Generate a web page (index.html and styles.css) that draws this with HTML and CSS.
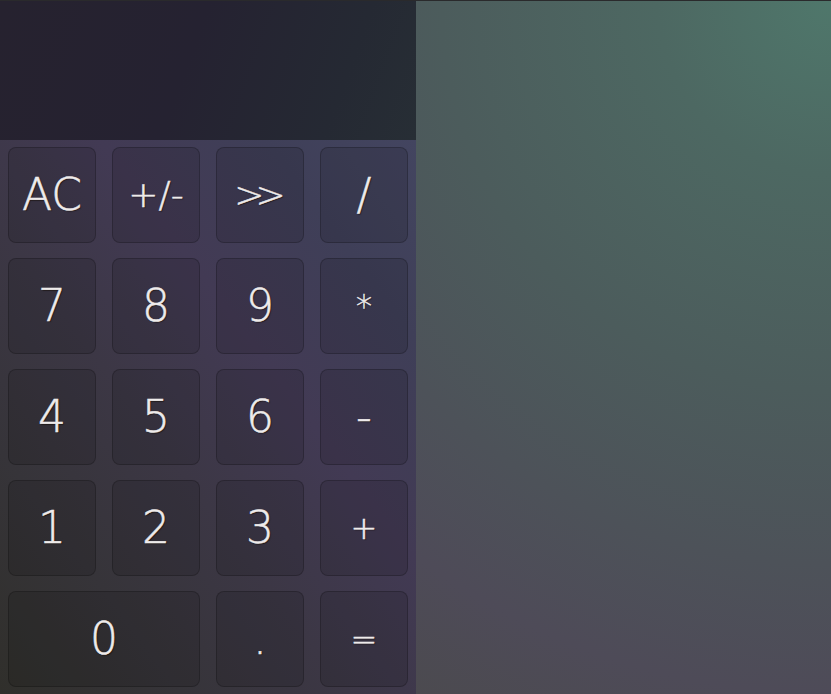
FILE: index.html
```html
<!DOCTYPE html>
<html lang="en">
<head>
<meta charset="utf-8">
<title>Calculator</title>
<link rel="stylesheet" href="styles.css">
</head>
<body>
<div class="page">
  <div class="calc">
    <div class="display"></div>
    <div class="keypad">
      <button class="key">AC</button>
      <button class="key key-mid">+/-</button>
      <button class="key key-mid key-tight">&gt;&gt;</button>
      <button class="key">/</button>
      <button class="key">7</button>
      <button class="key">8</button>
      <button class="key">9</button>
      <button class="key key-op">*</button>
      <button class="key">4</button>
      <button class="key">5</button>
      <button class="key">6</button>
      <button class="key">-</button>
      <button class="key">1</button>
      <button class="key">2</button>
      <button class="key">3</button>
      <button class="key key-op">+</button>
      <button class="key key-wide">0</button>
      <button class="key">.</button>
      <button class="key key-op">=</button>
    </div>
  </div>
</div>
</body>
</html>
```
FILE: styles.css
```css
html, body {
  margin: 0;
  padding: 0;
  height: 100%;
  overflow: hidden;
}

body {
  background: #2a2a2c;
  font-family: "DejaVu Sans", sans-serif;
}

.page {
  box-sizing: border-box;
  height: 100%;
  border-top: 1px solid #2a2a2c;
  background: radial-gradient(circle farthest-corner at 100% 0%,
    #4f776b 0%,
    #4d6862 16%,
    #4c5c5c 36%,
    #4d5259 52%,
    #4e4b58 64%,
    #4b4a4e 76%,
    #3e3c42 100%);
  display: flex;
  align-items: flex-start;
}

.calc {
  width: 416px;
  display: flex;
  flex-direction: column;
}

.display {
  height: 139px;
  background: linear-gradient(110deg, #26222f 0%, #252231 45%, #252933 80%, #272e35 100%);
}

.keypad {
  display: grid;
  grid-template-columns: repeat(4, 88px);
  grid-auto-rows: 96px;
  column-gap: 16px;
  row-gap: 15px;
  padding: 7px 8px 8px;
  background: linear-gradient(to top right,
    #302f2b 0%,
    #363439 22%,
    #3c3745 42%,
    #423a54 62%,
    #3f3f58 82%,
    #434560 100%);
}

.key {
  margin: 0;
  padding: 0;
  border: 1px solid rgba(0, 0, 0, 0.22);
  border-radius: 8px;
  background: rgba(0, 0, 0, 0.12);
  color: #eeebeb;
  font-family: "DejaVu Sans", sans-serif;
  font-weight: 200;
  font-size: 44px;
  line-height: 1;
  -webkit-text-stroke: 0.5px #eeebeb;
  text-shadow: 1px 1px 1px rgba(20, 10, 0, 0.6);
  display: flex;
  align-items: center;
  justify-content: center;
}

.key-mid {
  font-size: 36px;
}

.key-tight {
  letter-spacing: -9px;
  padding-right: 9px;
}

.key-op {
  font-size: 32px;
}

.key-wide {
  grid-column: span 2;
}
```
